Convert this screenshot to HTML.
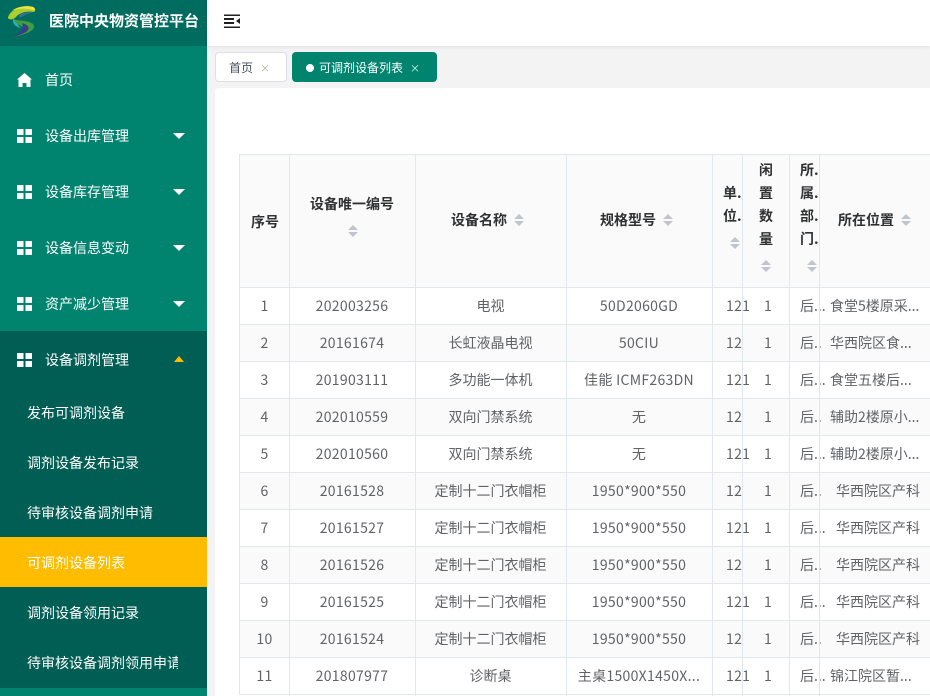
<!DOCTYPE html>
<html lang="zh-CN">
<head>
<meta charset="utf-8">
<title>医院中央物资管控平台</title>
<style>
*{box-sizing:border-box}
html,body{margin:0;padding:0;width:930px;height:696px;overflow:hidden;background:#f3f3f4;font-family:"Noto Sans CJK SC","Liberation Sans",sans-serif;font-size:14px;color:#606266}
.abs,.side,.m,.sub,.top,.card,.tab,.h,.sort{position:absolute}
.side{left:0;top:0;width:207px;height:696px;background:#00846f;overflow:hidden}
.logoBar{position:absolute;left:0;top:0;width:207px;height:46px;background:#006c5f}
.title{position:absolute;left:49px;top:11px;font-size:15px;line-height:20px;font-weight:bold;color:#fff;white-space:nowrap}
.m{left:0;width:207px;height:56px;line-height:57px;color:#fff;font-size:14px;padding-left:45px;white-space:nowrap}
.m svg.i{position:absolute;left:17px;top:21px}
.m i{position:absolute;left:173px;top:25px;width:0;height:0;border-left:6px solid transparent;border-right:6px solid transparent;border-top:6px solid #fff}
.m i.up{left:174px;top:24px;border-left-width:5px;border-right-width:5px;border-top:0;border-bottom:6px solid #ffbc00}
.subwrap{position:absolute;left:0;top:331px;width:207px;height:357px;background:#005e54}
.sub{left:0;width:207px;height:50px;line-height:51px;padding-left:27px;color:#fff;font-size:14px;white-space:nowrap;overflow:hidden}
.sub.on{background:#ffbc00;line-height:52px}
.top{left:207px;top:0;width:723px;height:46px;background:#fff;box-shadow:0 1px 4px rgba(0,0,0,.08)}
.tab{top:52px;height:30px;line-height:30px;font-size:12px;border-radius:4px;white-space:nowrap}
.t1{left:215px;width:72px;background:#fff;border:1px solid #dcdfe6;color:#495060;padding-left:13px}
.t2{left:292px;width:145px;background:#00846f;color:#fff;padding-left:27px;line-height:32px}
.t2:before{content:"";position:absolute;left:14px;top:12px;width:8px;height:8px;border-radius:50%;background:#fff}
.x{position:absolute;font-size:10px;color:#b5a79f}
.card{left:215px;top:88px;width:715px;height:608px;background:#fff;border-radius:4px 0 0 0}
.thead{position:absolute;left:239px;top:154px;width:691px;height:134px;background:#fafafa;border-top:1px solid #e2e7ee;border-bottom:1px solid #e2e7ee;border-left:1px solid #e2e7ee}
.v{position:absolute;top:154px;width:1px;height:542px;background:#e2e7ee;z-index:3}
.h{font-weight:bold;color:#303133;font-size:14px;line-height:23px;white-space:nowrap;z-index:2}
.sort{width:10px;height:12px;z-index:2}
.sort:before,.sort:after{content:"";position:absolute;left:0;width:0;height:0;border-left:5px solid transparent;border-right:5px solid transparent}
.sort:before{top:0;border-bottom:5px solid #c0c4cc}
.sort:after{bottom:0;border-top:5px solid #c0c4cc}
table{position:absolute;left:239px;top:288px;width:691px;border-collapse:separate;border-spacing:0;table-layout:fixed;font-size:14px;color:#606266;z-index:1}
td{height:37px;border-bottom:1px solid #e2e7ee;padding:0;text-align:center;white-space:nowrap;line-height:36px}
td:first-child{border-left:1px solid #e2e7ee}
td:nth-child(1),td:nth-child(2),td:nth-child(4),td:nth-child(5),td:nth-child(6){letter-spacing:.3px}
tr:nth-child(even) td{background:#fafafa}
td.u{text-align:left;padding-left:14px;overflow:visible}
td.q{padding-left:5px}
td.d{text-align:left;padding-left:11px}
td.l{text-align:left;padding-left:11px}
td.c{text-align:left;padding-left:17px}
</style>
</head>
<body>
<div class="side">
  <div class="logoBar"></div>
  <svg class="abs" style="left:0;top:0" width="46" height="46" viewBox="0 0 46 46">
    <path d="M8 18C9 11 20 5 31 6.500C36 7 36 11 34 12C28 11 20 12 16 17C13 20 9 20 8 18Z" fill="#a9cf2c"/>
    <path d="M12 10.500C18 6.500 26 5.500 31 6.500C35 7 35.500 9.500 34 10.500C28 8 19 8 12 10.500Z" fill="#ece63f"/>
    <path d="M19 15C23 12.500 29 11.500 34 12C28 13.500 24 15 20 18Z" fill="#3d6f95"/>
    <path d="M13 18C15 22 27 19 33 24C37 29 29 34 13 37C20 33 25 31 24 28C21 24 12 25 13 18Z" fill="#3f9f3c"/>
    <path d="M22 23C27 24.500 30 27 28 30C26 33 20 35 13 37C19 33 25 30 22 23Z" fill="#3b3a8c"/>
    <path d="M13 18C12 23 15 27 21 28C18 25 15 22 13 18Z" fill="#2fa9c7"/>
  </svg>
  <div class="title">医院中央物资管控平台</div>

  <div class="m" style="top:52px"><svg class="i" width="15" height="14" viewBox="0 0 15 14"><path d="M7.500 0L15 6.500H13.500V14H9.500V10H5.500V14H1.500V6.500H0Z" fill="#fff"/></svg>首页</div>
  <div class="m" style="top:108px"><svg class="i" width="15" height="14" viewBox="0 0 15 14"><path d="M0 0H6.500V6H0ZM8.500 0H15V6H8.500ZM0 8H6.500V14H0ZM8.500 8H15V14H8.500Z" fill="#fff"/></svg>设备出库管理<i></i></div>
  <div class="m" style="top:164px"><svg class="i" width="15" height="14" viewBox="0 0 15 14"><path d="M0 0H6.500V6H0ZM8.500 0H15V6H8.500ZM0 8H6.500V14H0ZM8.500 8H15V14H8.500Z" fill="#fff"/></svg>设备库存管理<i></i></div>
  <div class="m" style="top:220px"><svg class="i" width="15" height="14" viewBox="0 0 15 14"><path d="M0 0H6.500V6H0ZM8.500 0H15V6H8.500ZM0 8H6.500V14H0ZM8.500 8H15V14H8.500Z" fill="#fff"/></svg>设备信息变动<i></i></div>
  <div class="m" style="top:276px"><svg class="i" width="15" height="14" viewBox="0 0 15 14"><path d="M0 0H6.500V6H0ZM8.500 0H15V6H8.500ZM0 8H6.500V14H0ZM8.500 8H15V14H8.500Z" fill="#fff"/></svg>资产减少管理<i></i></div>
  <div class="subwrap"></div>
  <div class="m" style="top:332px"><svg class="i" width="15" height="14" viewBox="0 0 15 14"><path d="M0 0H6.500V6H0ZM8.500 0H15V6H8.500ZM0 8H6.500V14H0ZM8.500 8H15V14H8.500Z" fill="#fff"/></svg>设备调剂管理<i class="up"></i></div>
  <div class="sub" style="top:388px">发布可调剂设备</div>
  <div class="sub" style="top:438px">调剂设备发布记录</div>
  <div class="sub" style="top:488px">待审核设备调剂申请</div>
  <div class="sub on" style="top:537px">可调剂设备列表</div>
  <div class="sub" style="top:588px">调剂设备领用记录</div>
  <div class="sub" style="top:638px;width:178px;padding-left:27px">待审核设备调剂领用申请</div>
</div>

<div class="top"></div>
<svg class="abs" style="left:224px;top:14px" width="16" height="14" viewBox="0 0 16 14"><path d="M0 0.500H16V2H0ZM0 4H10V6H0ZM0 8H10V10H0ZM0 12.500H16V14H0ZM16 4V10L12 7Z" fill="#222"/></svg>

<div class="tab t1">首页<span class="x" style="left:44px;top:0">×</span></div>
<div class="tab t2">可调剂设备列表<span class="x" style="left:118px;top:0;color:#cfe">×</span></div>

<div class="card"></div>
<div class="thead"></div>

<div class="h" style="left:251px;top:211px">序号</div>
<div class="h" style="left:310px;top:193px">设备唯一编号</div><div class="sort" style="left:348px;top:225px"></div>
<div class="h" style="left:451px;top:209px">设备名称</div><div class="sort" style="left:514px;top:214px"></div>
<div class="h" style="left:600px;top:209px">规格型号</div><div class="sort" style="left:663px;top:214px"></div>
<div class="h" style="left:723px;top:182px;white-space:normal;width:20px">单.<br>位.</div><div class="sort" style="left:730px;top:237px"></div>
<div class="h" style="left:759px;top:159px;width:16px;white-space:normal">闲<br>置<br>数<br>量</div><div class="sort" style="left:761px;top:260px"></div>
<div class="h" style="left:800px;top:159px;width:20px;white-space:normal">所.<br>属.<br>部.<br>门.</div><div class="sort" style="left:807px;top:260px"></div>
<div class="h" style="left:838px;top:209px">所在位置</div><div class="sort" style="left:901px;top:214px"></div>

<div class="v" style="left:289px"></div>
<div class="v" style="left:415px"></div>
<div class="v" style="left:566px"></div>
<div class="v" style="left:712px"></div>
<div class="v" style="left:742px"></div>
<div class="v" style="left:789px"></div>
<div class="v" style="left:819px"></div>

<table>
<colgroup><col style="width:50px"><col style="width:126px"><col style="width:151px"><col style="width:146px"><col style="width:30px"><col style="width:47px"><col style="width:30px"><col style="width:111px"></colgroup>
<tbody>
<tr><td>1</td><td>202003256</td><td>电视</td><td>50D2060GD</td><td class="u">121</td><td class="q">1</td><td class="d">后...</td><td class="l">食堂5楼原采...</td></tr>
<tr><td>2</td><td>20161674</td><td>长虹液晶电视</td><td>50CIU</td><td class="u">12</td><td class="q">1</td><td class="d">后..</td><td class="l">华西院区食...</td></tr>
<tr><td>3</td><td>201903111</td><td>多功能一体机</td><td>佳能 ICMF263DN</td><td class="u">121</td><td class="q">1</td><td class="d">后...</td><td class="l">食堂五楼后...</td></tr>
<tr><td>4</td><td>202010559</td><td>双向门禁系统</td><td>无</td><td class="u">12</td><td class="q">1</td><td class="d">后..</td><td class="l">辅助2楼原小...</td></tr>
<tr><td>5</td><td>202010560</td><td>双向门禁系统</td><td>无</td><td class="u">121</td><td class="q">1</td><td class="d">后...</td><td class="l">辅助2楼原小...</td></tr>
<tr><td>6</td><td>20161528</td><td>定制十二门衣帽柜</td><td>1950*900*550</td><td class="u">12</td><td class="q">1</td><td class="d">后..</td><td class="c">华西院区产科</td></tr>
<tr><td>7</td><td>20161527</td><td>定制十二门衣帽柜</td><td>1950*900*550</td><td class="u">121</td><td class="q">1</td><td class="d">后...</td><td class="c">华西院区产科</td></tr>
<tr><td>8</td><td>20161526</td><td>定制十二门衣帽柜</td><td>1950*900*550</td><td class="u">12</td><td class="q">1</td><td class="d">后..</td><td class="c">华西院区产科</td></tr>
<tr><td>9</td><td>20161525</td><td>定制十二门衣帽柜</td><td>1950*900*550</td><td class="u">121</td><td class="q">1</td><td class="d">后...</td><td class="c">华西院区产科</td></tr>
<tr><td>10</td><td>20161524</td><td>定制十二门衣帽柜</td><td>1950*900*550</td><td class="u">12</td><td class="q">1</td><td class="d">后..</td><td class="c">华西院区产科</td></tr>
<tr><td>11</td><td>201807977</td><td>诊断桌</td><td>主桌1500X1450X...</td><td class="u">121</td><td class="q">1</td><td class="d">后...</td><td class="l">锦江院区暂...</td></tr>
</tbody>
</table>
</body>
</html>
